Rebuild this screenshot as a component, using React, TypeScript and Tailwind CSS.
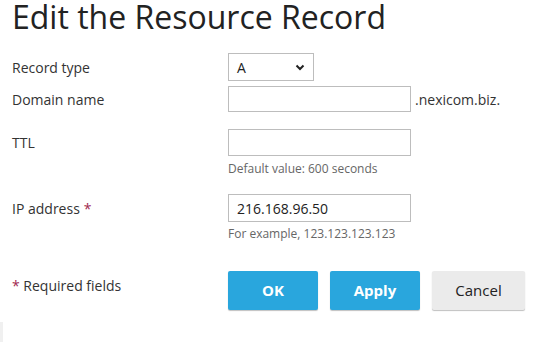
import React from 'react';

const Label = ({ text, required, h }: { text: string; required?: boolean; h: string }) => (
  <div className={`w-[216px] shrink-0 flex items-center ${h}`}>
    <span>{text}</span>
    {required && <span className="ml-1 text-[#a0294f]">*</span>}
  </div>
);

const Input = ({ value, h }: { value?: string; h: string }) => (
  <div className={`w-[183px] ${h} border border-[#bdbdbd] bg-white flex items-center px-2 text-[14px] text-[#222]`}>
    {value}
  </div>
);

const App = () => {
  return (
    <div className="w-[556px] h-[342px] bg-white relative overflow-hidden text-[14px] text-[#333] font-['Open_Sans',sans-serif]">
      <div className="pl-3">
        <h1 className="text-[32px] leading-[40px] -mt-[3px] text-[#222] mb-[16px]">Edit the Resource Record</h1>

        {/* Record type */}
        <div className="flex">
          <Label text="Record type" h="h-[28px]" />
          <div className="w-[86px] h-[28px] border border-[#bdbdbd] flex items-center justify-between pl-2 pr-2 text-[14px] text-[#222]">
            <span>A</span>
            <svg width="10" height="7" viewBox="0 0 10 7">
              <path d="M1.5 1.5 L5 5 L8.5 1.5" fill="none" stroke="#222" strokeWidth="2" />
            </svg>
          </div>
        </div>

        {/* Domain name */}
        <div className="flex mt-[5px]">
          <Label text="Domain name" h="h-[26px]" />
          <Input h="h-[26px]" />
          <div className="h-[26px] flex items-center ml-[4px]">.nexicom.biz.</div>
        </div>

        {/* TTL */}
        <div className="flex mt-[17px]">
          <Label text="TTL" h="h-[27px]" />
          <div>
            <Input h="h-[27px]" />
            <div className="mt-[5px] text-[12px] leading-[16px] text-[#666]">Default value: 600 seconds</div>
          </div>
        </div>

        {/* IP address */}
        <div className="flex mt-[17px]">
          <Label text="IP address" required h="h-[28px]" />
          <div>
            <Input value="216.168.96.50" h="h-[28px]" />
            <div className="mt-[4px] text-[12px] leading-[16px] text-[#666]">For example, 123.123.123.123</div>
          </div>
        </div>

        {/* Buttons */}
        <div className="flex mt-[29px]">
          <div className="w-[216px] shrink-0 pt-[4px]">
            <span className="text-[#a0294f]">*</span> Required fields
          </div>
          <div className="flex gap-3">
            <button className="w-[90px] h-[39px] bg-[#29a6dd] text-white font-bold text-[15px] rounded-[2px] shadow-[0_1px_1px_rgba(0,0,0,0.25)]">
              OK
            </button>
            <button className="w-[90px] h-[39px] bg-[#29a6dd] text-white font-bold text-[15px] rounded-[2px] shadow-[0_1px_1px_rgba(0,0,0,0.25)]">
              Apply
            </button>
            <button className="w-[93px] h-[39px] bg-[#ebebeb] text-[#222] text-[15px] rounded-[2px] shadow-[0_1px_1px_rgba(0,0,0,0.25)]">
              Cancel
            </button>
          </div>
        </div>
      </div>
      <div className="absolute left-0 top-[322px] w-[3px] h-[20px] bg-[#f0f0f0]" />
    </div>
  );
};

export default App;
